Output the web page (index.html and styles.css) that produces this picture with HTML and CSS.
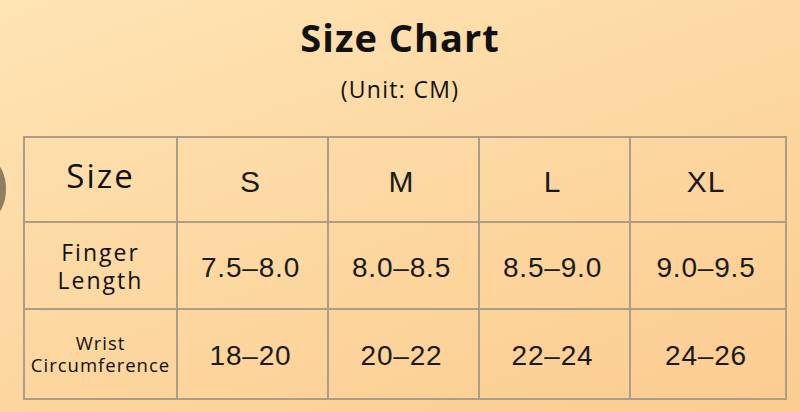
FILE: index.html
```html
<!DOCTYPE html>
<html>
<head>
<meta charset="utf-8">
<link rel="stylesheet" href="styles.css">
</head>
<body>
<div class="page">
  <span class="side-dot"></span>
  <h1 class="title">Size Chart</h1>
  <p class="unit">(Unit: CM)</p>
  <table class="chart">
    <colgroup>
      <col class="col-label">
      <col class="col-size">
      <col class="col-size">
      <col class="col-size">
      <col class="col-last">
    </colgroup>
    <tr class="row-size">
      <th class="label label-size">Size</th>
      <td>S</td><td>M</td><td>L</td><td>XL</td>
    </tr>
    <tr class="row-finger">
      <th class="label label-finger"><span class="line">Finger</span><span class="line">Length</span></th>
      <td class="num">7.5–8.0</td><td class="num">8.0–8.5</td><td class="num">8.5–9.0</td><td class="num">9.0–9.5</td>
    </tr>
    <tr class="row-wrist">
      <th class="label label-wrist"><span class="line">Wrist</span><span class="line">Circumference</span></th>
      <td class="num">18–20</td><td class="num">20–22</td><td class="num">22–24</td><td class="num">24–26</td>
    </tr>
  </table>
</div>
</body>
</html>
```

FILE: styles.css
```css
html, body {
  margin: 0;
  padding: 0;
}
body {
  width: 800px;
  height: 412px;
  overflow: hidden;
  background: linear-gradient(160deg, #fee4b4 0%, #fdd9a3 45%, #fbcc90 100%);
  font-family: "Open Sans", sans-serif;
  color: #111;
}
.page {
  position: relative;
  width: 800px;
  height: 412px;
  display: flex;
  flex-direction: column;
  align-items: center;
}
.side-dot {
  position: absolute;
  left: -22px;
  top: 162px;
  width: 28px;
  height: 54px;
  border-radius: 50%;
  background: #8f7e60;
}
.title {
  margin: 12px 0 0;
  font-size: 38px;
  line-height: 50px;
  font-weight: 700;
  letter-spacing: 1px;
}
.unit {
  margin: 13px 0 0;
  font-size: 23px;
  line-height: 28px;
  letter-spacing: 1.3px;
}
.chart {
  margin-top: 33px;
  margin-left: 10px;
  border-collapse: collapse;
  width: 762px;
  table-layout: fixed;
}
.col-label { width: 153px; }
.col-size { width: 151px; }
.col-last { width: 156px; }
.chart th, .chart td {
  border: 2px solid #ab9d88;
  text-align: center;
  padding: 0;
  vertical-align: middle;
}
.chart th {
  font-weight: 400;
  font-family: "Open Sans", sans-serif;
}
.chart td {
  font-family: "Liberation Sans", Arial, sans-serif;
  font-size: 30px;
  letter-spacing: 1px;
  color: #1a1a1a;
  padding-right: 4px;
  padding-top: 4px;
}
.chart td.num {
  font-size: 28px;
  letter-spacing: 0.8px;
  padding-top: 4px;
}
.row-size { height: 85px; }
.row-finger { height: 87px; }
.row-wrist { height: 90px; }
.line {
  display: block;
}
.label-size {
  font-size: 33px;
  letter-spacing: 2px;
  padding-bottom: 8px !important;
}
.label-finger {
  font-size: 23px;
  letter-spacing: 2px;
}
.label-finger .line {
  height: 28px;
  line-height: 28px;
}
.label-wrist {
  font-size: 18.5px;
  letter-spacing: 1px;
}
.label-wrist .line {
  height: 22px;
  line-height: 22px;
}
```
